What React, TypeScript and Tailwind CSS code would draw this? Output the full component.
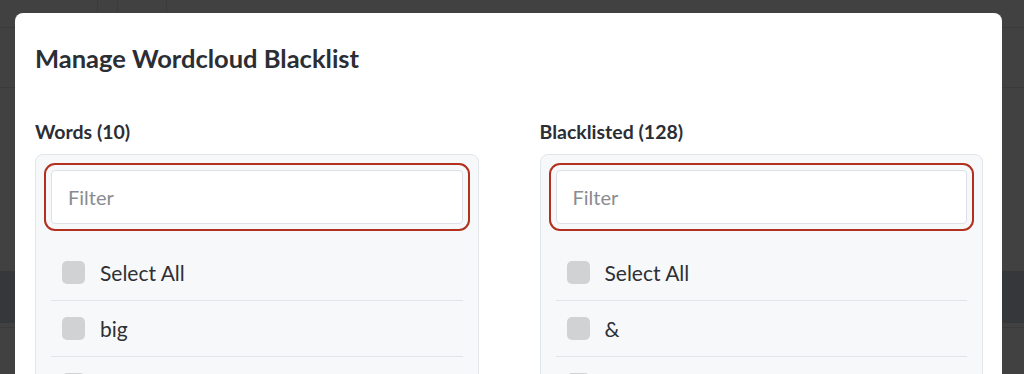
import { FC } from 'react';

interface ListColumnProps {
    label: string;
    items: string[];
}

const Checkbox: FC = () => (
    <span className="w-[23px] h-[23px] shrink-0 rounded-[5px] bg-[#d1d2d4]" />
);

const ListColumn: FC<ListColumnProps> = ({ label, items }) => {
    return (
        <div className="flex flex-col">
            <p className="text-[19.5px] leading-[23px] font-bold text-[#2b2e34]">{label}</p>
            <div className="mt-[11px] h-[260px] rounded-[8px] border border-[#e2e5ea] bg-[#f7f8fa] px-[15px] pt-[15px]">
                <input
                    placeholder="Filter"
                    className="w-full h-[54px] rounded-[4px] border border-[#dde1e7] bg-white px-[16px] text-[20px] text-[#2e3035] placeholder:text-[#8a8c91] outline-2 outline-[#b3301f] outline-offset-[5px] outline-solid"
                />
                <ul className="mt-[21px]">
                    {items.map((item, i) => (
                        <li
                            key={i}
                            className="h-[56px] flex items-center gap-[15px] pl-[11px] border-b border-[#e1e4e9] text-[21px] text-[#2e3035]"
                        >
                            <Checkbox />
                            {item}
                        </li>
                    ))}
                </ul>
            </div>
        </div>
    );
};

export default function App() {
    return (
        <div className="relative w-[1024px] h-[374px] overflow-hidden bg-[#414141]" style={{ fontFamily: 'Lato, "Open Sans", sans-serif' }}>
            {/* page behind the overlay */}
            <div className="flex flex-col">
                <div className="h-[28px] flex border-b border-[#3a3a3a]">
                    <div className="w-[98px] border-r border-[#3b3b3b]" />
                    <div className="w-[20px] border-r border-[#3b3b3b]" />
                    <div className="w-[49px] border-r border-[#3b3b3b]" />
                </div>
                <div className="h-[60px] border-b border-[#3a3a3a]" />
                <div className="h-[183px]" />
                <div className="h-[52px] bg-[#36373b]" />
                <div className="h-[4px]" />
                <div className="border-b border-[#3a3a3a]" />
            </div>

            {/* modal */}
            <div className="absolute left-[15px] top-[13px] w-[987px] h-[420px] rounded-t-[8px] bg-white pl-[20px] pr-[19px] pt-[30px]">
                <h2 className="text-[25.5px] leading-[30px] font-bold text-[#2b2e34]">Manage Wordcloud Blacklist</h2>
                <div className="mt-[47px] grid grid-cols-2 gap-[61px]">
                    <ListColumn label="Words (10)" items={["Select All", "big", ""]} />
                    <ListColumn label="Blacklisted (128)" items={["Select All", "&", ""]} />
                </div>
            </div>
        </div>
    );
}
